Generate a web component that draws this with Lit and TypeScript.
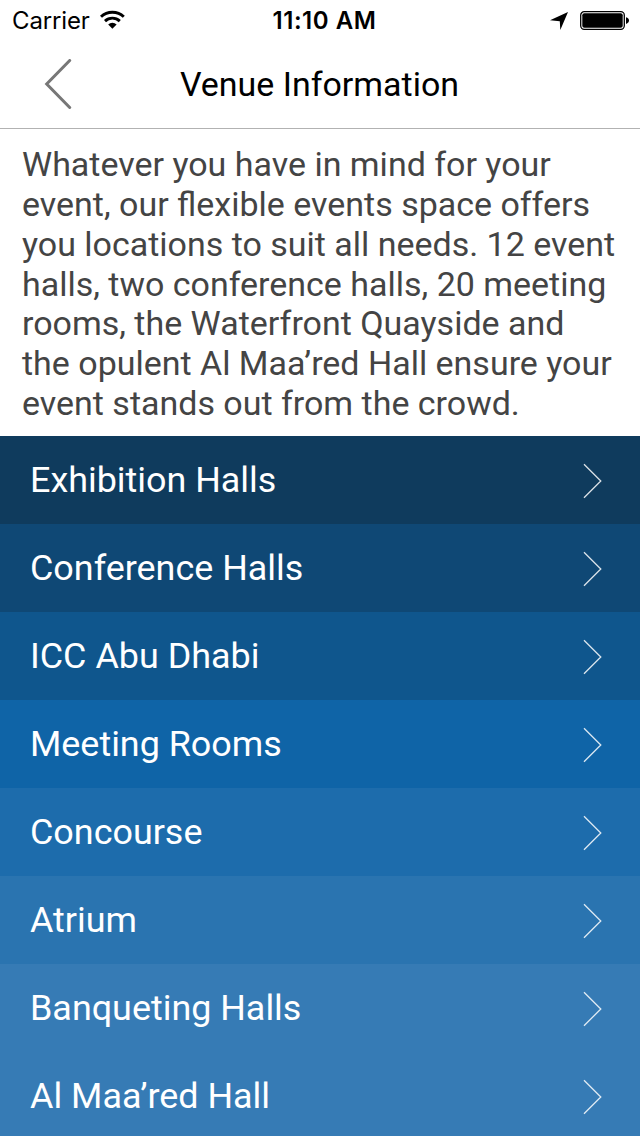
import { LitElement, html, css } from "lit";
import { customElement } from "lit/decorators.js";

const intro = [
  "Whatever you have in mind for your",
  "event, our flexible events space offers",
  "you locations to suit all needs. 12 event",
  "halls, two conference halls, 20 meeting",
  "rooms, the Waterfront Quayside and",
  "the opulent Al Maa’red Hall ensure your",
  "event stands out from the crowd.",
];

const venues = [
  { name: "Exhibition Halls", tone: "t1" },
  { name: "Conference Halls", tone: "t2" },
  { name: "ICC Abu Dhabi", tone: "t3" },
  { name: "Meeting Rooms", tone: "t4" },
  { name: "Concourse", tone: "t5" },
  { name: "Atrium", tone: "t6" },
  { name: "Banqueting Halls", tone: "t7" },
  { name: "Al Maa’red Hall", tone: "t7" },
];

@customElement("app-root")
export class AppRoot extends LitElement {
  static styles = css`
    :host {
      display: flex;
      flex-direction: column;
      width: 640px;
      height: 1136px;
      overflow: hidden;
      background: #fff;
      color: #000;
      font-family: Roboto, sans-serif;
    }
    svg { display: block; flex: none; }
    .status {
      display: grid;
      flex: none;
      grid-template-columns: 1fr auto 1fr;
      align-items: center;
      height: 40px;
      padding: 0 11px 0 12px;
      font-family: Inter, sans-serif;
      font-size: 24px;
      line-height: 38px;
    }
    .left { display: flex; align-items: center; gap: 10px; }
    .right { display: flex; align-items: center; justify-content: flex-end; gap: 12px; }
    .carrier { padding-top: 2px; letter-spacing: -0.15px; }
    .time { font-weight: 600; padding: 2px 0 0 8px; letter-spacing: 0.55px; }
    .nav {
      display: grid;
      flex: none;
      grid-template-columns: 100px 1fr 100px;
      align-items: center;
      height: 88px;
      border-bottom: 1px solid #b2b2b2;
    }
    .back { padding-left: 44px; }
    .title { font-size: 33.95px; line-height: 40px; font-weight: 400; margin: 0; padding: 2px 1px 0 0; text-align: center; }
    .intro {
      box-sizing: border-box;
      flex: none;
      margin: 0;
      padding: 16px 0 0 22px;
      height: 307px;
      color: #444;
      font-size: 33.97px;
      line-height: 39.84px;
      white-space: nowrap;
    }
    .line { display: block; }
    .row {
      display: flex;
      align-items: center;
      justify-content: space-between;
      height: 88px;
      padding: 0 38px 0 30px;
      color: #fff;
      font-size: 35.9px;
      flex: none;
    }
    .chevron { margin-top: 2px; }
    .t1 { background: #0f3b5d; }
    .t2 { background: #0f4875; }
    .t3 { background: #0f568d; }
    .t4 { background: #0f64a7; }
    .t5 { background: #1d6cac; }
    .t6 { background: #2a74b0; }
    .t7 { background: #367bb5; }
  `;

  render() {
    return html`
      <div class="status">
        <div class="left"><span class="carrier">Carrier</span>
          <svg width="26" height="20" viewBox="0 0 26 20" fill="none" stroke="#000" stroke-width="2.9">
            <path d="M1 6.8a16.5 16.5 0 0 1 22.8 0M5 11.1a10.8 10.8 0 0 1 14.8 0"/><path d="M8.2 14.5a6.2 6.2 0 0 1 8.4 0L12.4 18.7z" fill="#000" stroke="none"/>
          </svg>
        </div>
        <span class="time">11:10 AM</span>
        <div class="right">
          <svg width="18" height="20" viewBox="0 0 18 20"><path d="M18 2L10.3 20L9.8 11.2L0 10.2z"/></svg>
          <svg width="49" height="20" viewBox="0 0 49 20"><rect x=".7" y="1.7" width="43.6" height="17.6" rx="3.5" fill="none" stroke="#000" stroke-width="1.3"/><rect x="2.3" y="3.3" width="40.4" height="14.4" rx="2"/><path d="M46 7.3c4 1 4 5.6 0 6.6z"/></svg>
        </div>
      </div>
      <div class="nav">
        <svg class="back" width="28" height="50" viewBox="0 0 28 50" fill="none" stroke="#777" stroke-width="3" stroke-linecap="round"><path d="M25.7 1.5L2.7 25L25.7 48.5"/></svg>
        <h1 class="title">Venue Information</h1>
      </div>
      <p class="intro">${intro.map((l) => html`<span class="line">${l}</span>`)}</p>
      ${venues.map(
        (v) => html`<div class="row ${v.tone}">
          <span class="name">${v.name}</span>
          <svg class="chevron" width="19" height="36" viewBox="0 0 19 36" fill="none" stroke="#fff" stroke-opacity=".85" stroke-width="1.3"><path d="M1 1.2L17.8 18L1 34.8"/></svg>
        </div>`,
      )}
    `;
  }
}
